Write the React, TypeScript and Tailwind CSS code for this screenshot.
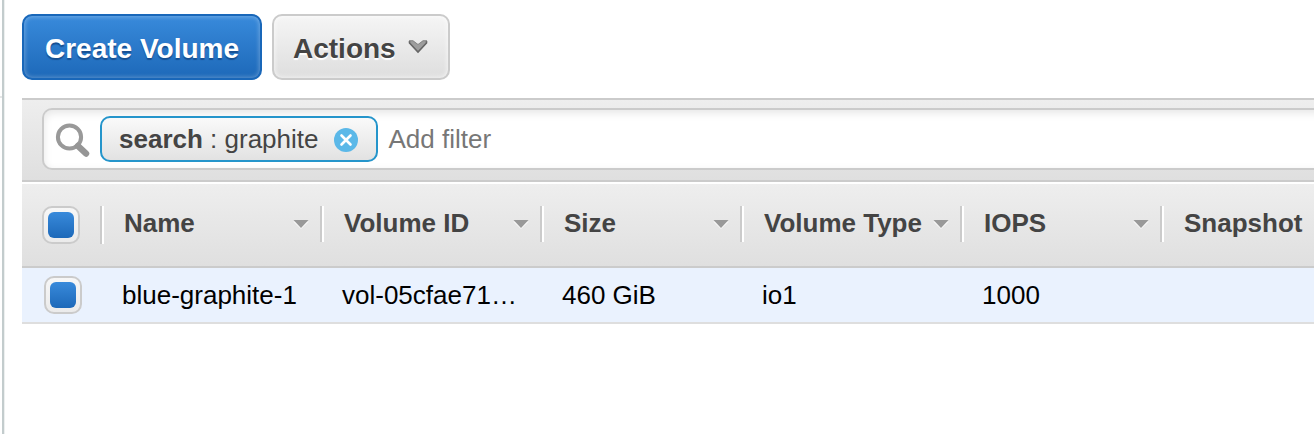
import React, { useState } from "react";

const columns = [
  { label: "Name", value: "blue-graphite-1" },
  { label: "Volume ID", value: "vol-05cfae71…" },
  { label: "Size", value: "460 GiB" },
  { label: "Volume Type", value: "io1" },
  { label: "IOPS", value: "1000" },
  { label: "Snapshot", value: "" },
];

function Checkbox({ label }: { label: string }) {
  return (
    <input
      type="checkbox"
      defaultChecked
      aria-label={label}
      className="block size-[38px] appearance-none rounded-[10px] border-2 border-[#cbcbcb] bg-linear-to-b from-[#f7f7f7] to-[#ebebeb] p-1 checked:before:block checked:before:size-[26px] checked:before:rounded-md checked:before:bg-linear-to-b checked:before:from-[#388adb] checked:before:to-[#1d69b9] checked:before:content-['']"
    />
  );
}

function SearchIcon() {
  return (
    <svg viewBox="0 0 36 36" className="size-9 shrink-0" aria-hidden="true">
      <circle cx="15.5" cy="16" r="11.6" fill="none" stroke="#999" strokeWidth="4" />
      <path d="M24 25L32 32.5" stroke="#959595" strokeWidth="6.5" strokeLinecap="round" />
    </svg>
  );
}

function ClearIcon() {
  return (
    <svg viewBox="0 0 24 26" className="block h-[26px] w-6" aria-hidden="true">
      <circle cx="12" cy="14" r="12" fill="#5bb8e8" />
      <path
        d="M7.5 9.5L16.5 18.5M16.5 9.5L7.5 18.5"
        stroke="#fff"
        strokeWidth="2.6"
        strokeLinecap="round"
      />
    </svg>
  );
}

function Chevron() {
  return (
    <svg viewBox="0 0 20 16" className="h-4 w-5" aria-hidden="true">
      <path d="M1 1.5H5L10 5.5L15 1.5H19V4L10 13.5L1 4Z" fill="#9d9d9d" />
      <path d="M1.5 2V4L10 13L18.5 4V2" fill="none" stroke="#666" strokeWidth="1.6" />
      <path d="M1 1.8H5L10 5.5L15 1.8H19" fill="none" stroke="#858585" strokeWidth="1" />
    </svg>
  );
}

function Caret() {
  return (
    <svg viewBox="0 0 16 12" className="h-3 w-4 shrink-0" aria-hidden="true">
      <path d="M0 4.5H16L8 12Z" fill="#f8f8f8" />
      <path d="M0.5 3H15.5L8 11Z" fill="#999" />
    </svg>
  );
}

export default function App() {
  const [filter, setFilter] = useState("");
  return (
    <div className="flex min-h-screen overflow-x-hidden bg-white font-['Liberation_Sans',Arial,sans-serif] text-[26px] leading-8 text-[#444]">
      <aside className="w-1 shrink-0 border-r-2 border-[#c3cccd] shadow-[1px_0_0_#edf0f0]">
        <div className="h-[98px] border-b-2 border-[#e5e7e7]" />
      </aside>
      <main className="min-w-0 flex-1 pl-[18px]">
        <div className="flex gap-2.5 pt-3.5 pb-[18px] text-[28px] font-bold">
          <button
            type="button"
            className="h-[66px] rounded-[10px] border-2 border-[#1967b9] bg-linear-to-b from-[#388adb] to-[#1d69b9] px-[21px] pt-1 whitespace-nowrap text-white shadow-[inset_0_0_4px_1px_rgba(255,255,255,0.28)] [text-shadow:0_2px_1px_#174f91]"
          >
            Create Volume
          </button>
          <button
            type="button"
            className="flex h-[66px] items-center gap-3 rounded-[10px] border-2 border-[#cbcbcb] bg-linear-to-b from-[#f5f5f5] to-[#dedede] pt-1 pr-5 pl-[19px] shadow-[inset_0_0_4px_1px_rgba(255,255,255,0.6)] [text-shadow:0_2px_1px_#fff]"
          >
            Actions
            <span className="pb-1">
              <Chevron />
            </span>
          </button>
        </div>

        <div className="mb-0.5 border-y-2 border-[#cbcbcb] bg-linear-to-b from-[#eeeeee] to-[#dfdfdf] pt-2 pb-2.5 pl-5">
          <div className="-mr-3 flex h-[62px] items-center rounded-l-[10px] border-2 border-r-0 border-[#cbcbcb] bg-white pr-3 pl-2.5 shadow-[inset_0_3px_8px_rgba(0,0,0,0.1)]">
            <SearchIcon />
            <div className="ml-2.5 flex h-[46px] shrink-0 items-center rounded-[10px] border-2 border-[#2595cb] bg-linear-to-b from-[#fafafa] to-[#e2e2e2] pr-[18px] pl-[17px]">
              <b>search</b>
              <span className="whitespace-pre"> : graphite</span>
              <button type="button" aria-label="Remove filter" className="ml-4">
                <ClearIcon />
              </button>
            </div>
            <input
              type="text"
              aria-label="Add filter"
              placeholder="Add filter"
              value={filter}
              onChange={(e) => setFilter(e.target.value)}
              className="ml-2.5 h-10 min-w-0 flex-1 bg-transparent outline-none placeholder:text-[#777]"
            />
          </div>
        </div>

        <table className="w-full table-fixed border-separate border-spacing-0 text-left">
          <colgroup>
            <col className="w-[82px]" />
            <col className="w-[220px]" />
            <col className="w-[220px]" />
            <col className="w-[200px]" />
            <col className="w-[220px]" />
            <col className="w-[200px]" />
            <col />
          </colgroup>
          <thead>
            <tr className="bg-linear-to-b from-[#eeeeee] to-[#dfdfdf]">
              <th className="border-b-2 border-[#cbcbcb] pt-[22px] pb-[22px] align-top">
                <div className="mr-0.5 h-[38px] border-r-2 border-[#cbcbcb] pl-5 shadow-[2px_0_0_#fff]">
                  <Checkbox label="Select all volumes" />
                </div>
              </th>
              {columns.map(({ label }, i) => (
                <th key={label} className="border-b-2 border-[#cbcbcb] pt-[22px] pb-6 align-top">
                  <div
                    className={
                      i === columns.length - 1
                        ? "flex h-9 items-center pb-0.5 pl-5"
                        : "mr-0.5 flex h-9 items-center justify-between border-r-2 border-[#cbcbcb] pr-[11px] pb-0.5 pl-5 shadow-[2px_0_0_#fff]"
                    }
                  >
                    <span className="whitespace-nowrap">{label}</span>
                    {i < columns.length - 1 && <Caret />}
                  </div>
                </th>
              ))}
            </tr>
          </thead>
          <tbody>
            <tr className="bg-[#eaf2fe] text-black">
              <td className="border-b-2 border-[#dedede] py-2 pl-[22px]">
                <Checkbox label="Select blue-graphite-1" />
              </td>
              {columns.map(({ label, value }) => (
                <td key={label} className="truncate border-b-2 border-[#dedede] pl-[18px]">
                  {value}
                </td>
              ))}
            </tr>
          </tbody>
        </table>
      </main>
    </div>
  );
}
